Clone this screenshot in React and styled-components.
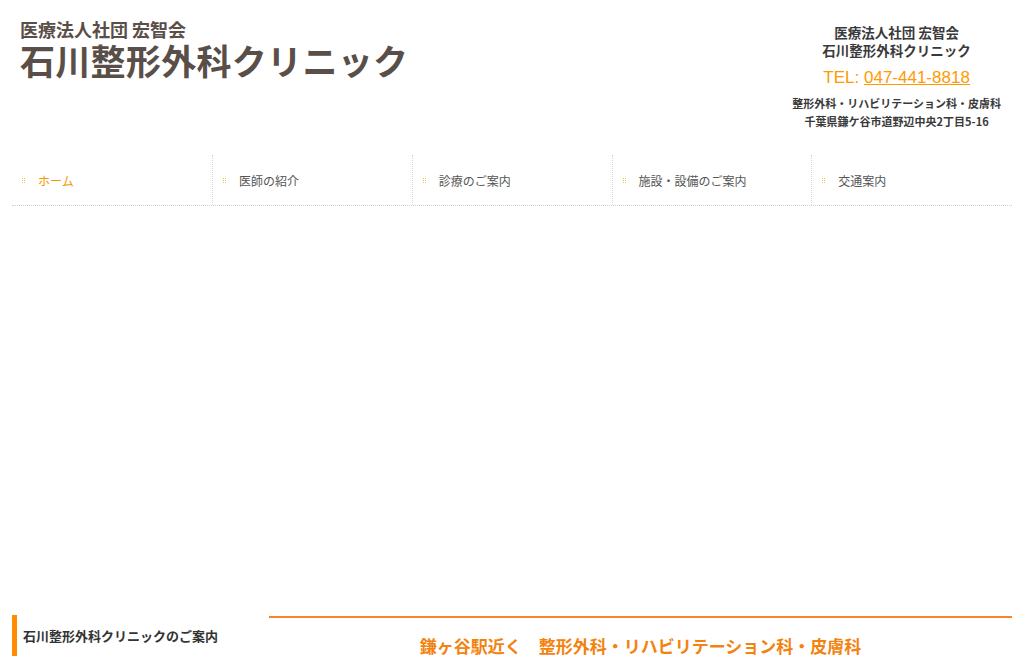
import React from 'react'
import styled, { createGlobalStyle } from 'styled-components'

const GlobalStyle = createGlobalStyle`
  html, body {
    margin: 0;
    padding: 0;
    background: #ffffff;
  }
  body {
    font-family: "Liberation Sans", "Noto Sans CJK JP", sans-serif;
    color: #333333;
  }
`;

const Page = styled.div`
  width: 1000px;
  margin: 0 auto;
`;

const Header = styled.header`
  display: flex;
  justify-content: space-between;
  height: 155px;
`;

const Logo = styled.a`
  display: block;
  padding: 19px 0 0 8px;
  color: #594e48;
  text-decoration: none;
  font-family: "Noto Sans CJK JP", sans-serif;
  font-weight: 700;

  .sub {
    font-size: 18px;
    line-height: 20px;
  }

  .main {
    margin-top: 2px;
    font-size: 35px;
    line-height: 38px;
    letter-spacing: 0.3px;
  }
`;

const Info = styled.div`
  padding: 23px 11px 0 0;
  text-align: center;
  font-family: "Noto Sans CJK JP", sans-serif;
  font-weight: 700;
  color: #3a3a3a;
`;

const InfoName = styled.div`
  font-size: 13.5px;
  line-height: 18px;
`;

const Tel = styled.div`
  margin-top: 9px;
  font-family: "Liberation Sans", "Noto Sans CJK JP", sans-serif;
  font-size: 17px;
  line-height: 20px;
  font-weight: 400;
  color: #ff9a00;

  a {
    color: #ff9a00;
    text-decoration: underline;
  }
`;

const InfoSmall = styled.div`
  margin-top: ${p => p.$first ? '6px' : '0'};
  font-size: 11px;
  line-height: 18px;
`;

const Nav = styled.ul`
  display: flex;
  list-style: none;
  margin: 0;
  padding: 0;
  border-bottom: 1px dotted #cfcfcf;
`;

const NavItem = styled.li`
  width: ${p => p.$first ? '200px' : '199.75px'};
  height: 50px;
  display: flex;
  align-items: center;
  gap: 12px;
  padding-left: 10px;
  box-sizing: border-box;
  border-left: ${p => p.$first ? 'none' : '1px dotted #d6d6d6'};
  font-family: "Noto Sans CJK JP", sans-serif;
  font-size: 12px;
  color: ${p => p.$active ? '#f39800' : '#555555'};
`;

const Bullet = () => (
  <svg width="4" height="5" viewBox="0 0 4 5">
    {[0, 2, 4].map(y => [0, 2].map(x => (
      <rect key={x + '-' + y} x={x} y={y} width="1" height="1" fill="#f0c850" />
    )))}
  </svg>
);

const Hero = styled.div`
  height: 409px;
`;

const Lower = styled.section`
  display: flex;
  gap: 12px;
`;

const Side = styled.aside`
  width: 245px;
  flex-shrink: 0;
`;

const SideTitle = styled.h2`
  margin: 0;
  height: 41px;
  display: flex;
  align-items: center;
  padding-left: 6px;
  border-left: 5px solid #ff8c00;
  font-family: "Noto Sans CJK JP", sans-serif;
  font-size: 13px;
  font-weight: 700;
  color: #333333;
`;

const Main = styled.main`
  flex: 1;
  border-top: 2px solid #f7862a;
  margin-top: 1px;
`;

const MainTitle = styled.h1`
  margin: 0;
  padding-top: 17px;
  text-align: center;
  font-family: "Noto Sans CJK JP", sans-serif;
  font-size: 17px;
  line-height: 22px;
  font-weight: 700;
  color: #f3820f;
`;

const menu = ['ホーム', '医師の紹介', '診療のご案内', '施設・設備のご案内', '交通案内'];

export default function App() {
  return (
    <Page>
      <GlobalStyle />
      <Header>
        <Logo href="#">
          <div className="sub">医療法人社団 宏智会</div>
          <div className="main">石川整形外科クリニック</div>
        </Logo>
        <Info>
          <InfoName>医療法人社団 宏智会</InfoName>
          <InfoName>石川整形外科クリニック</InfoName>
          <Tel>TEL: <a href="#">047-441-8818</a></Tel>
          <InfoSmall $first>整形外科・リハビリテーション科・皮膚科</InfoSmall>
          <InfoSmall>千葉県鎌ケ谷市道野辺中央2丁目5-16</InfoSmall>
        </Info>
      </Header>
      <Nav>
        {menu.map((m, i) => (
          <NavItem key={m} $first={i === 0} $active={i === 0}>
            <Bullet />
            {m}
          </NavItem>
        ))}
      </Nav>
      <Hero />
      <Lower>
        <Side>
          <SideTitle>石川整形外科クリニックのご案内</SideTitle>
        </Side>
        <Main>
          <MainTitle>鎌ヶ谷駅近く　整形外科・リハビリテーション科・皮膚科</MainTitle>
        </Main>
      </Lower>
    </Page>
  );
}
